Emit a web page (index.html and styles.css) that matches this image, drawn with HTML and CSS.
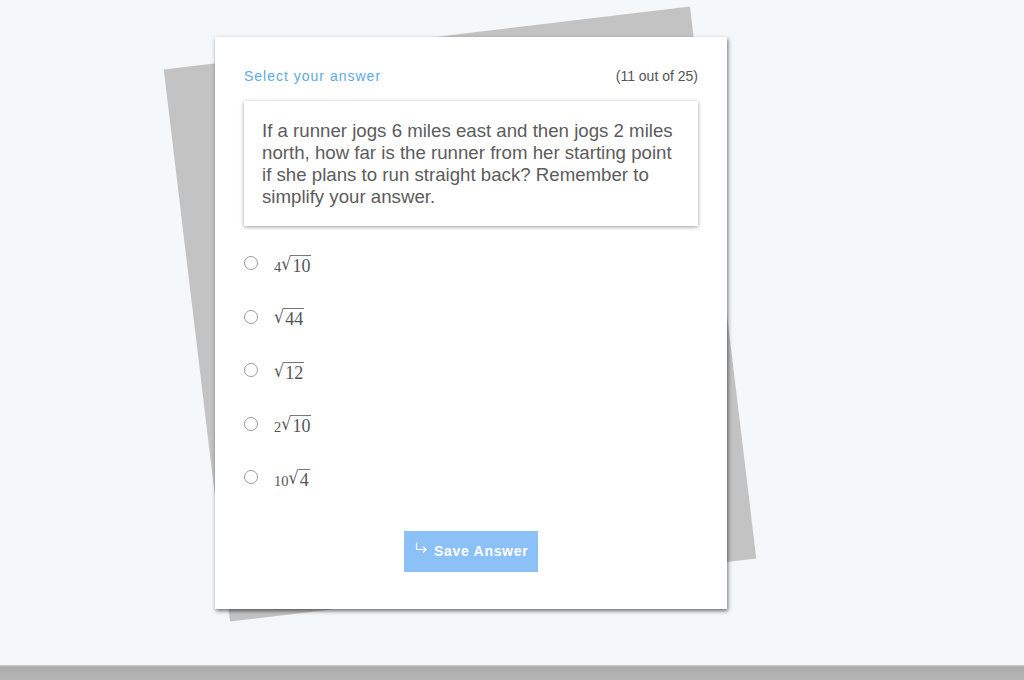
FILE: index.html
```html
<!DOCTYPE html>
<html>
<head>
<meta charset="utf-8">
<link rel="stylesheet" href="styles.css">
</head>
<body>
<div class="stage">
  <div class="backsheet"></div>
  <div class="card">
    <div class="card-head">
      <span class="prompt">Select your answer</span>
      <span class="count">(11 out of 25)</span>
    </div>
    <div class="question">If a runner jogs 6 miles east and then jogs 2 miles north, how far is the runner from her starting point if she plans to run straight back? Remember to simplify your answer.</div>
    <ul class="options">
      <li class="option"><span class="radio"></span><span class="math"><span class="coef">4</span><span class="rad">√</span><span class="under">10</span></span></li>
      <li class="option"><span class="radio"></span><span class="math"><span class="rad">√</span><span class="under">44</span></span></li>
      <li class="option"><span class="radio"></span><span class="math"><span class="rad">√</span><span class="under">12</span></span></li>
      <li class="option"><span class="radio"></span><span class="math"><span class="coef">2</span><span class="rad">√</span><span class="under">10</span></span></li>
      <li class="option"><span class="radio"></span><span class="math"><span class="coef">10</span><span class="rad">√</span><span class="under">4</span></span></li>
    </ul>
    <div class="actions">
      <button class="save"><svg class="save-icon" width="14" height="14" viewBox="0 0 14 14"><path d="M2.5 1.5 V8.5 H12 M9 5.5 L12 8.5 L9 11.5" fill="none" stroke="#fff" stroke-width="1.2"/></svg>Save Answer</button>
    </div>
  </div>
</div>
<div class="footer"></div>
</body>
</html>
```
FILE: styles.css
```css
html, body {
  margin: 0;
  padding: 0;
}
body {
  background: #f4f8fb;
  width: 1024px;
  height: 680px;
  overflow: hidden;
  font-family: "Liberation Sans", Arial, sans-serif;
}
.stage {
  position: relative;
  height: 665px;
  padding-top: 37px;
  box-sizing: border-box;
}
.backsheet {
  position: absolute;
  left: 195px;
  top: 36px;
  width: 530px;
  height: 556px;
  background: #c3c3c3;
  transform: rotate(-6.85deg);
}
.card {
  position: relative;
  margin-left: 215px;
  width: 512px;
  height: 572px;
  box-sizing: border-box;
  background: #fff;
  box-shadow: 1px 2px 4px rgba(0,0,0,0.55);
  padding: 30px 29px 0 29px;
  display: flex;
  flex-direction: column;
}
.card-head {
  display: flex;
  justify-content: space-between;
  align-items: center;
  height: 18px;
  font-size: 14px;
}
.prompt {
  color: #5daadf;
  letter-spacing: 1px;
}
.count {
  color: #555;
}
.question {
  margin-top: 16px;
  padding: 19px 18px 18px 18px;
  font-size: 18.67px;
  line-height: 22px;
  color: #5c5c5c;
  box-shadow: 0 1px 4px rgba(0,0,0,0.4);
}
.options {
  list-style: none;
  margin: 26px 0 0 0;
  padding: 0;
}
.option {
  display: flex;
  align-items: center;
  height: 26px;
  margin-bottom: 27.6px;
}
.radio {
  width: 12px;
  height: 12px;
  border: 1px solid #9a9a9a;
  border-radius: 50%;
  box-sizing: content-box;
  margin-right: 16px;
  margin-top: -4px;
}
.math {
  display: flex;
  align-items: flex-end;
  color: #555;
  padding-top: 0;
  margin-top: -2px;
}
.coef {
  font-family: "Liberation Serif", "Times New Roman", serif;
  font-size: 14.5px;
  line-height: 14px;
  color: #555;
  margin-right: 0;
}
.rad {
  font-family: "DejaVu Serif", serif;
  font-size: 16px;
  line-height: 18px;
  color: #555;
  display: inline-block;
  transform: scaleY(1.12);
  transform-origin: bottom;
}
.under {
  font-family: "Liberation Serif", "Times New Roman", serif;
  font-size: 18px;
  line-height: 16px;
  border-top: 1px solid #777;
  padding: 2px 1px 0 1px;
  color: #555;
}
.actions {
  display: flex;
  justify-content: center;
  margin-top: 11px;
}
.save {
  display: flex;
  align-items: center;
  gap: 6px;
  width: 134px;
  height: 41px;
  border: none;
  background: #8bc1f7;
  color: #fff;
  font-family: "Liberation Sans", Arial, sans-serif;
  font-size: 14px;
  font-weight: bold;
  letter-spacing: 0.7px;
  padding: 0 0 0 10px;
  box-sizing: border-box;
}
.save-icon {
  margin-top: -6px;
}
.footer {
  height: 15px;
  background: linear-gradient(#cfcfcf 0, #ababab 2px, #b5b5b5 15px);
}
```
